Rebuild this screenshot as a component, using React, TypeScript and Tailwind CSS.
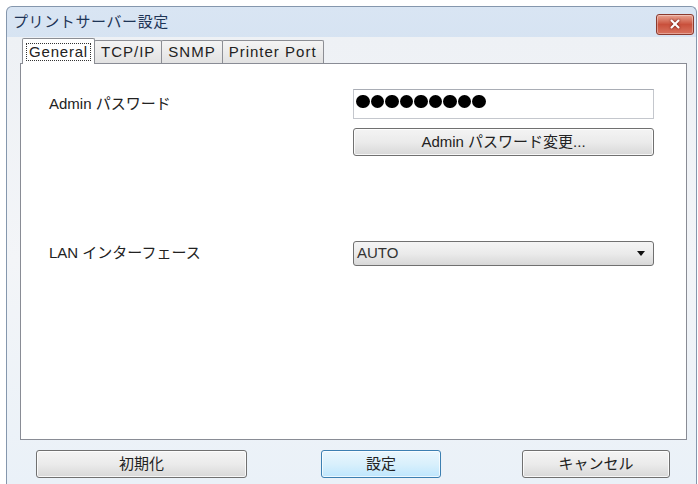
import { X } from 'lucide-react';

const font = "font-['Liberation_Sans','Noto_Sans_CJK_JP',sans-serif]";

const tabs = ['General', 'TCP/IP', 'SNMP', 'Printer Port'];

function WinButton({ label, width, primary }: { label: string; width: string; primary?: boolean }) {
  return (
    <button
      className={`${width} h-[28px] rounded-[3px] border text-[15px] text-[#222] ${
        primary
          ? 'border-[#3c7fb1] bg-gradient-to-b from-[#eaf6fd] via-[#d9f0fc] to-[#bee6fd] shadow-[inset_0_0_0_1px_rgba(255,255,255,0.7)]'
          : 'border-[#707070] bg-gradient-to-b from-[#f4f4f4] via-[#ebebeb] to-[#d8d8d8] shadow-[inset_0_0_0_1px_rgba(255,255,255,0.8)]'
      }`}
    >
      {label}
    </button>
  );
}

export default function App() {
  return (
    <div className={`w-[698px] h-[484px] bg-white pl-[6px] pt-[6px] overflow-hidden ${font}`}>
      <div className="w-[691px] h-[478px] rounded-t-[6px] border border-b-0 border-[#8597ad] bg-gradient-to-b from-[#d9e5f3] via-[#c5d8ed] to-[#dfe8f2] flex flex-col">
        {/* title bar */}
        <div className="h-[30px] flex items-center justify-between pl-[6px] pr-[2px]">
          <span className="text-[15px] text-[#1e3456] tracking-[0.6px]">プリントサーバー設定</span>
          <div className="w-[38px] h-[21px] mt-[4px] rounded-[3px] border border-[#8b3a2e] bg-gradient-to-b from-[#e8a493] via-[#c9503c] to-[#d8735f] flex items-center justify-center shadow-[inset_0_0_0_1px_rgba(255,255,255,0.35)]">
            <X size={14} strokeWidth={3.5} className="text-white drop-shadow-[0_0_1px_rgba(80,0,0,0.9)]" />
          </div>
        </div>

        {/* client area */}
        <div className="flex-1 bg-gradient-to-b from-[#eef1f5] via-[#f3f5f8] to-[#eaf1f8] pl-[13px] pr-[9px] flex flex-col">
          {/* tab strip */}
          <div className="h-[26px] flex items-end pl-[2px] relative z-10">
            {tabs.map((t, i) =>
              i === 0 ? (
                <div
                  key={t}
                  className="h-[26px] w-[73px] -mb-px bg-white border border-b-0 border-[#8c8e94] rounded-t-[2px] flex items-center justify-center"
                >
                  <span className="px-[2px] h-[18px] leading-[16px] border border-dotted border-[#333] text-[15px] tracking-[0.8px] text-[#222]">
                    {t}
                  </span>
                </div>
              ) : (
                <div
                  key={t}
                  className="h-[23px] -ml-px px-[6px] border border-b-0 border-[#8c8e94] rounded-t-[2px] bg-gradient-to-b from-[#f4f4f4] to-[#e2e2e2] flex items-center text-[15px] tracking-[1px] text-[#222]"
                >
                  {t}
                </div>
              )
            )}
          </div>

          {/* tab panel */}
          <div className="h-[377px] border border-[#898c95] bg-white pl-[28px] pr-[32px] pt-[25px] flex flex-col">
            <div className="flex justify-between">
              <div className="h-[30px] flex items-center text-[15px] text-[#222]">Admin パスワード</div>
              <div className="w-[301px] flex flex-col gap-[9px]">
                <div className="h-[30px] border border-[#c4c7cd] border-t-[#a9adb5] bg-white flex items-center pl-[2px] pb-[5px] gap-[1px]">
                  {Array.from({ length: 9 }).map((_, i) => (
                    <div key={i} className="w-[13.5px] h-[13.5px] rounded-full bg-black" />
                  ))}
                </div>
                <WinButton label="Admin パスワード変更..." width="w-[301px]" />
              </div>
            </div>

            <div className="flex justify-between mt-[85px]">
              <div className="h-[25px] flex items-center text-[15px] text-[#222]">LAN インターフェース</div>
              <div className="w-[301px] h-[25px] rounded-[3px] border border-[#707070] bg-gradient-to-b from-[#f4f4f4] via-[#ebebeb] to-[#d8d8d8] flex items-center justify-between pl-[3px] pr-[8px] text-[15px] text-[#333]">
                <span>AUTO</span>
                <svg width="8" height="5" viewBox="0 0 8 5">
                  <path d="M0 0h8L4 5z" fill="#111" />
                </svg>
              </div>
            </div>
          </div>

          {/* bottom buttons */}
          <div className="flex mt-[10px] pl-[16px]">
            <WinButton label="初期化" width="w-[211px]" />
            <div className="ml-[74px]">
              <WinButton label="設定" width="w-[120px]" primary />
            </div>
            <div className="ml-[81px]">
              <WinButton label="キャンセル" width="w-[148px]" />
            </div>
          </div>
        </div>
      </div>
    </div>
  );
}
